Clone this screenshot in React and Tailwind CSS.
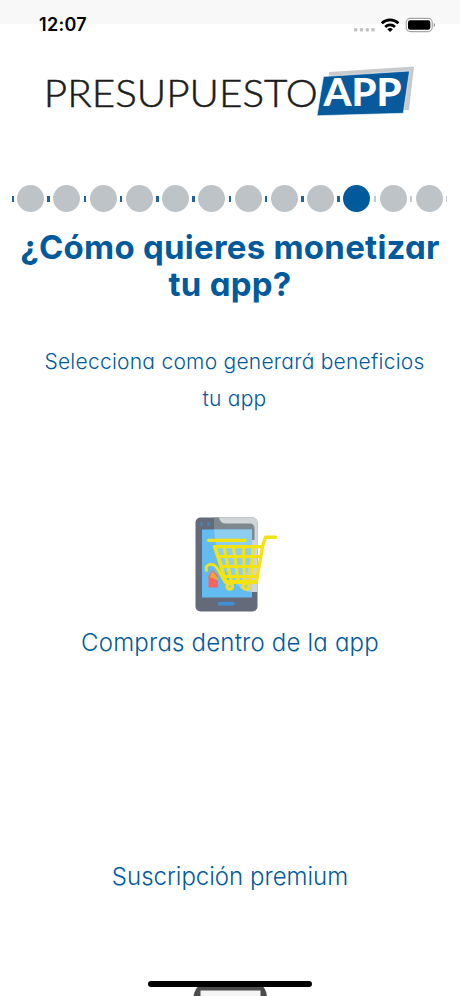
const STEPS = 12
const ACTIVE_STEP = 9

const tickColor = (done) => (done ? 'bg-[#1c6399]' : 'bg-[#c3cad2]')

function StatusBar() {
  return (
    <div className="h-[50px] shrink-0 bg-linear-to-b from-[#f8f8f8] from-[24px] to-white to-[24px] flex items-start justify-between pl-[39px] pr-[23px] pt-[13px]">
      <span className="text-[18px] leading-6 font-semibold tracking-[0.3px] text-black">12:07</span>
      <svg width="84" height="20" viewBox="354 13 84 20">
        <g fill="#c4c4c4">
          <rect x="355" y="28" width="3.4" height="3.4" rx="1" />
          <rect x="360.8" y="28" width="3.4" height="3.4" rx="1" />
          <rect x="366.6" y="28" width="3.4" height="3.4" rx="1" />
          <rect x="372.3" y="28" width="3.4" height="3.4" rx="1" />
        </g>
        <g fill="none" stroke="#000" strokeWidth="2.7">
          <path d="M382.8 23.2a12 12 0 0 1 16.6 0" />
          <path d="M386.2 26.9a7.1 7.1 0 0 1 9.8 0" />
        </g>
        <path d="M388.3 29.3a4.1 4.1 0 0 1 5.6 0l-2.8 2.8z" />
        <rect x="407.2" y="18.4" width="26" height="13.2" rx="4" fill="#fff" stroke="#a6a6a6" strokeWidth="1.2" />
        <rect x="409" y="20.3" width="22.3" height="9.4" rx="2.2" />
        <path d="M434.8 23v4c1.5-.8 1.5-3.2 0-4z" fill="#777" />
      </svg>
    </div>
  )
}

function Logo() {
  return (
    <svg className="ml-[40px] mt-[10px] shrink-0" width="380" height="60" viewBox="40 60 380 60">
      <path d="M329 72L414 66.5L409 110L402 110.5L328 112z" fill="#c9cacc" />
      <path d="M323.5 76.5L409.5 71L403.3 113.3L317 115.7z" fill="#075a9c" stroke="#fff" strokeWidth=".6" />
      <text x="43.8" y="107.2" fontFamily="Lato" fontWeight="300" fontSize="37.5" textLength="274" lengthAdjust="spacingAndGlyphs" fill="#1c1c1c" stroke="#1c1c1c" strokeWidth=".5">
        PRESUPUESTO
      </text>
      <text x="323.5" y="106.3" fontFamily="Lato" fontWeight="900" fontSize="37" textLength="78" lengthAdjust="spacingAndGlyphs" fill="#fff">
        APP
      </text>
    </svg>
  )
}

function Stepper() {
  return (
    <div className="mt-[65px] ml-[12.4px] w-[435px] h-[27px] shrink-0 flex">
      {Array.from({ length: STEPS }, (_, i) => (
        <div key={i} className="flex-1 flex items-center justify-between">
          <span className={`w-[1.2px] h-[6px] ${tickColor(i <= ACTIVE_STEP)}`} />
          <span className={`size-[27px] rounded-full ${i === ACTIVE_STEP ? 'bg-[#005a9c]' : 'bg-[#bdc3c7]'}`} />
          <span className={`w-[1.2px] h-[6px] ${tickColor(i < ACTIVE_STEP)}`} />
        </div>
      ))}
    </div>
  )
}

function ShoppingPhone() {
  return (
    <svg width="90" height="100" viewBox="192 514 90 100" className="ml-[192px]">
      <rect x="195.5" y="517.5" width="62" height="94" rx="5" fill="#646a7a" />
      {/* glare over the right side of the case */}
      <path d="M214 517.5H253a4.5 4.5 0 0 1 4.5 4.5V592H252V527H224L214 522z" fill="#d0d6d8" />
      <path d="M214 517.5H219Q220 523.5 226 523.5H250a4.5 4.5 0 0 1 4.5 4.5V540H251V530H214z" fill="#7d878d" />
      <rect x="202" y="529.5" width="50" height="68" fill="#62bcf2" />
      <path d="M214 529.5H252V592Q219 585 214 529.5z" fill="#8dceee" />
      <path d="M252 550V592Q245 591 240 588Q250 570 252 550z" fill="#c1d0d7" />
      <path d="M201.5 522v4M208.5 522v4" stroke="#4387bd" strokeWidth="2" />
      <rect x="218" y="602" width="16.5" height="3.4" rx="1.2" fill="#3f8fd6" />
      <path d="M208.5 576L212.5 570L218 576V587.5H208.5z" fill="#f8645c" />
      <path d="M209.5 577L212.5 571L218 578V580.5z" fill="#f4a13c" />
      <g fill="none" stroke="#f4e313" strokeLinecap="round" strokeLinejoin="round">
        <path d="M208.5 540.3H245" strokeWidth="3.2" />
        <path d="M214.5 546.6H262M262.5 546.5L265.5 537.3H275.5M262.5 546.5L256.5 581" strokeWidth="3.4" />
        <path d="M215 547L226 582H256" strokeWidth="3.8" />
        <path d="M218 556.5H260M221 566.5H258M224 576.5H257" strokeWidth="2.8" />
        <path d="M224 547L231 580M233.5 547L238 580M243.5 547L244.5 580M253 547L250.5 580" strokeWidth="3.2" />
        <path d="M206.5 570.5C204 564 213 562 217 568L225 582" strokeWidth="2.8" />
        <circle cx="229.8" cy="586.3" r="3" fill="#afc4bd" strokeWidth="2.8" />
        <circle cx="246" cy="586.3" r="3" fill="#afc4bd" strokeWidth="2.8" />
      </g>
    </svg>
  )
}

function NextPhone() {
  return (
    <svg width="76" height="15" viewBox="192 981 76 15" className="absolute left-[192px] bottom-0">
      <path d="M193.5 996Q195 988 200 985H261Q266 988 267 996z" fill="#4c4c4c" />
      <path d="M200.5 996V990.5H260.5V996z" fill="#f5f5f5" />
    </svg>
  )
}

export default function App() {
  return (
    <main className="relative w-full max-w-[460px] h-[996px] overflow-hidden bg-white flex flex-col font-['Inter',sans-serif] text-[#005a9c]">
      <StatusBar />
      <Logo />
      <Stepper />
      <h1 className="mt-[17px] shrink-0 flex flex-col text-center text-[33px] leading-[36.5px] font-bold tracking-[0.25px] [font-feature-settings:'cv11','ss03'] whitespace-nowrap">
        <span>¿Cómo quieres monetizar</span>
        <span>tu app?</span>
      </h1>
      <p className="mt-[41px] ml-[9px] shrink-0 text-center text-[21px] leading-[37px] font-light tracking-[0.25px] [font-feature-settings:'cv11'] whitespace-nowrap">
        Selecciona como generará beneficios
        <br />
        tu app
      </p>
      <div className="mt-[97px] shrink-0 flex flex-col">
        <ShoppingPhone />
        <p className="mt-[11px] text-center text-[24px] leading-9 font-light tracking-[0.2px] [font-feature-settings:'cv11'] whitespace-nowrap">
          Compras dentro de la app
        </p>
      </div>
      <p className="mt-[198px] shrink-0 text-center text-[24px] leading-9 font-light [font-feature-settings:'cv11'] whitespace-nowrap">
        Suscripción premium
      </p>
      <NextPhone />
      <div className="absolute left-[148px] top-[981px] w-[164px] h-[6px] rounded-full bg-black" />
    </main>
  )
}
